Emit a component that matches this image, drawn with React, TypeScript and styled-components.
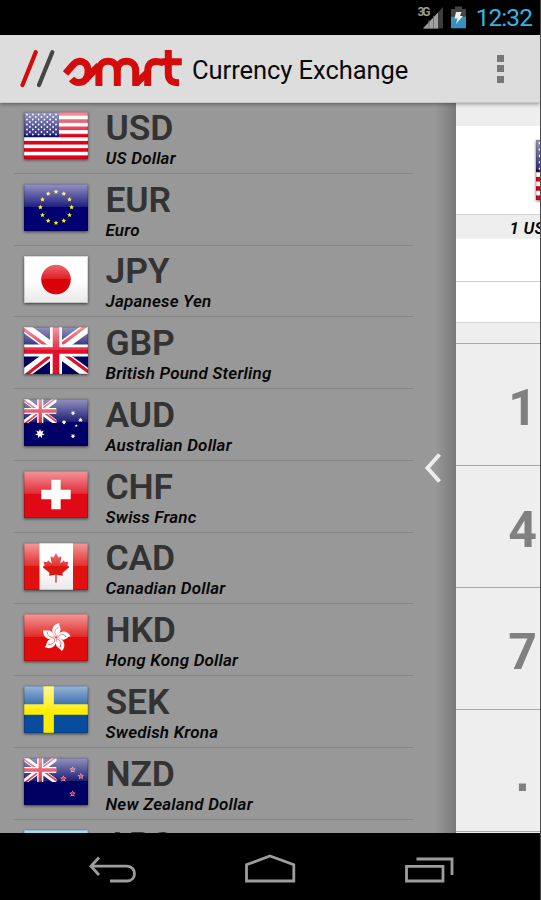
import type { ReactNode } from "react";
import styled, { createGlobalStyle } from "styled-components";

const currencies = [
  { code: "USD", name: "US Dollar" },
  { code: "EUR", name: "Euro" },
  { code: "JPY", name: "Japanese Yen" },
  { code: "GBP", name: "British Pound Sterling" },
  { code: "AUD", name: "Australian Dollar" },
  { code: "CHF", name: "Swiss Franc" },
  { code: "CAD", name: "Canadian Dollar" },
  { code: "HKD", name: "Hong Kong Dollar" },
  { code: "SEK", name: "Swedish Krona" },
  { code: "NZD", name: "New Zealand Dollar" },
  { code: "ARS" },
];

const keys = ["1", "4", "7", "."];

function starPoints(cx: number, cy: number, r: number, points = 5) {
  const list: string[] = [];
  for (let i = 0; i < points * 2; i++) {
    const radius = i % 2 ? r * 0.48 : r;
    const angle = (Math.PI * i) / points - Math.PI / 2;
    list.push(
      `${(cx + radius * Math.cos(angle)).toFixed(2)},${(cy + radius * Math.sin(angle)).toFixed(2)}`
    );
  }
  return list.join(" ");
}

function UnionJack() {
  return (
    <>
      <rect width="64" height="47" fill="#00005f" />
      <path d="M0 0 64 47M64 0 0 47" stroke="#fff" strokeWidth="10" />
      <path
        d="M-2 1 30 24.500M66 46 34 22.500M62 -1 34 20M2 48 30 26"
        stroke="#e0102a"
        strokeWidth="3.200"
      />
      <path d="M32 0V47M0 23.500H64" stroke="#fff" strokeWidth="12" />
      <path d="M32 0V47M0 23.500H64" stroke="#e0102a" strokeWidth="6.600" />
    </>
  );
}

const flagArt: Record<string, ReactNode> = {
  USD: (
    <>
      <rect width="64" height="47" fill="#fff" />
      {[0, 1, 2, 3, 4, 5, 6].map((i) => (
        <rect key={i} y={i * 7.23} width="64" height="3.62" fill="#e3001b" />
      ))}
      <rect width="35" height="25" fill="#12126c" />
      {[0, 1, 2, 3, 4, 5, 6, 7, 8].map((row) =>
        Array.from({ length: row % 2 ? 5 : 6 }, (_, i) => (
          <circle
            key={`${row}-${i}`}
            cx={3 + (row % 2 ? 2.9 : 0) + i * 5.8}
            cy={2.5 + row * 2.5}
            r="0.9"
            fill="#fff"
          />
        ))
      )}
    </>
  ),
  EUR: (
    <>
      <rect width="64" height="47" fill="#000070" />
      {Array.from({ length: 12 }, (_, i) => (
        <polygon
          key={i}
          points={starPoints(
            32 + 15.6 * Math.sin((i * Math.PI) / 6),
            23.3 - 15.6 * Math.cos((i * Math.PI) / 6),
            2.5
          )}
          fill="#ffee00"
        />
      ))}
    </>
  ),
  JPY: (
    <>
      <rect width="64" height="47" fill="url(#paper)" />
      <circle cx="32" cy="23.5" r="14.8" fill="#dc0008" />
    </>
  ),
  GBP: <UnionJack />,
  AUD: (
    <>
      <rect width="64" height="47" fill="#000066" />
      <svg width="32.500" height="24" viewBox="0 0 64 47" preserveAspectRatio="none">
        <UnionJack />
      </svg>
      <polygon points={starPoints(16, 34.7, 5, 7)} fill="#fff" />
      <polygon points={starPoints(49, 14, 2.5, 7)} fill="#fff" />
      <polygon points={starPoints(40, 23.2, 2.5, 7)} fill="#fff" />
      <polygon points={starPoints(56.5, 21, 2.5, 7)} fill="#fff" />
      <polygon points={starPoints(49, 37, 2.5, 7)} fill="#fff" />
      <polygon points={starPoints(52.3, 26.7, 1.5)} fill="#fff" />
    </>
  ),
  CHF: (
    <>
      <rect width="64" height="47" fill="#df0a16" />
      <path d="M32 8.800V38.200M17.300 23.500H46.700" stroke="#fff" strokeWidth="9.300" />
    </>
  ),
  CAD: (
    <>
      <rect width="64" height="47" fill="#df120f" />
      <rect x="15.500" width="33.500" height="47" fill="url(#paper)" />
      <path
        d="M32 10 34.500 14.500 37.600 13.200 36.300 20.600 40 17.300 40.900 19.300 44.500 18.700 43.400 22.600 45.500 24 38.400 30.100 39 32.700 32.600 31.700V39.500H31.400V31.700L25 32.700 25.600 30.100 18.500 24 20.600 22.600 19.500 18.700 23.100 19.300 24 17.300 27.700 20.600 26.400 13.200 29.500 14.500Z"
        fill="#dc1712"
      />
    </>
  ),
  HKD: (
    <>
      <rect width="64" height="47" fill="#e00c0c" />
      {[8, 80, 152, 224, 296].map((angle) => (
        <g key={angle} transform={`translate(32 23.500) rotate(${angle})`}>
          <path
            d="M0 -.5C-7 -4 -6 -12.500 1.500 -14.800C.5 -12 5 -9.500 3 -5.500C2 -3.500 .3 -3 0 -.5Z"
            fill="#fff"
          />
          <path d="M-.3 -2C-3 -5 -2 -8 0 -9.500" stroke="#e33b3b" strokeWidth=".7" fill="none" />
          <circle cx=".3" cy="-9.800" r=".7" fill="#e33b3b" />
        </g>
      ))}
    </>
  ),
  SEK: (
    <>
      <rect width="64" height="47" fill="#084d9d" />
      <path d="M24.700 0V47M0 23.500H64" stroke="#ffed00" strokeWidth="10.300" />
    </>
  ),
  NZD: (
    <>
      <rect width="64" height="47" fill="#000062" />
      <svg width="32.500" height="24" viewBox="0 0 64 47" preserveAspectRatio="none">
        <UnionJack />
      </svg>
      {[
        [48.6, 11.8],
        [56.8, 18.3],
        [39.4, 20.8],
        [48.6, 35.8],
      ].map(([x, y]) => (
        <g key={`${x}-${y}`}>
          <polygon points={starPoints(x, y, 3.3)} fill="#e8c8d8" />
          <polygon points={starPoints(x, y, 2.5)} fill="#e0102a" />
        </g>
      ))}
    </>
  ),
  ARS: (
    <>
      <rect width="64" height="47" fill="#45aee0" />
      <rect y="15.500" width="64" height="16" fill="#fff" />
    </>
  ),
};

function Flag({ code, large }: { code: string; large?: boolean }) {
  return (
    <FlagImage $large={large} viewBox="0 0 64 47" preserveAspectRatio="none">
      <defs>
        <linearGradient id="gloss" x1="0" y1="0" x2="0" y2="1">
          <stop offset="0" stopColor="#fff" stopOpacity=".58" />
          <stop offset="1" stopColor="#fff" stopOpacity=".12" />
        </linearGradient>
        <linearGradient id="paper" x1="0" y1="0" x2="0" y2="1">
          <stop offset=".5" stopColor="#fff" />
          <stop offset="1" stopColor="#e8e8e8" />
        </linearGradient>
      </defs>
      {flagArt[code]}
      <rect width="64" height="23" fill="url(#gloss)" />
      <rect x=".5" y=".5" width="63" height="46" fill="none" stroke="#000" strokeOpacity=".15" />
    </FlagImage>
  );
}

function Logo() {
  return (
    <svg width="165" height="44" viewBox="20 47 165 44" fill="none">
      <path d="M35.700 52.200 22.500 85" stroke="#d40b0b" strokeWidth="4.200" strokeLinecap="round" />
      <path d="M52.300 52.200 39 85" stroke="#464646" strokeWidth="4.200" strokeLinecap="round" />
      <g stroke="#d40b0b" strokeWidth="7">
        <path d="M65.500 73.500 72 66C76 61 80 60.700 83 62C87.500 63.800 88.500 68 88 73C87.500 79.500 83.500 82.500 78.500 82.500C75.500 82.500 73.500 81.300 71.500 79" />
        <path d="M85.500 79.500 99 65.500" />
        <path d="M98.900 86V70.500C98.900 58.200 117.300 58.200 117.300 70.500V86" />
        <path d="M117.300 70.500C117.300 58.200 135.700 58.200 135.700 70.500V86" />
        <path d="M136.500 83 149 71" />
        <path d="M147.700 86V71C147.700 62 154 59.500 163.500 63" />
        <path d="M168.300 50V74C168.300 80.500 172 82.700 179 82.700M161.500 61.700H181.800" />
      </g>
    </svg>
  );
}

export default function App() {
  return (
    <Screen>
      <GlobalStyle />
      <StatusBar>
        <svg width="50" height="26" viewBox="417 5 50 26">
          <path d="M443 7V28.500H423Z" fill="#3d3d3d" />
          <path d="M438 12.400V28.500H423Z" fill="#a0a0a0" />
          <path d="M429 20V29M433.500 16V29" stroke="#666" strokeWidth=".8" />
          <text x="417.500" y="16.300" fontSize="12" fontWeight="700" textLength="13" fill="#999">
            3G
          </text>
          <path d="M451 9H455V6.500H462V9H466V16.500H451Z" fill="#444" />
          <path d="M451 16.500H466V28.300H451Z" fill="#3592bd" />
          <path d="M456 12H461.500L460 16H463L456 24 457.500 18.500H454.500Z" fill="#eee" />
        </svg>
        <Clock>12:32</Clock>
      </StatusBar>
      <ActionBar>
        <Logo />
        <Title>Currency Exchange</Title>
        <Overflow>
          <Dot />
          <Dot />
          <Dot />
        </Overflow>
      </ActionBar>
      <Content>
        <Drawer>
          <CurrencyList>
            {currencies.map(({ code, name }) => (
              <CurrencyRow key={code}>
                <Flag code={code} />
                <CurrencyText>
                  <Code>{code}</Code>
                  {name && <Name>{name}</Name>}
                </CurrencyText>
              </CurrencyRow>
            ))}
          </CurrencyList>
          <Handle>
            <svg width="18" height="32" viewBox="0 0 18 32">
              <path d="M15.500 2.500 3.500 16 15.500 29.500" fill="none" stroke="#eee" strokeWidth="4" />
            </svg>
          </Handle>
        </Drawer>
        <Converter>
          <Band $height={23} />
          <Band $height={89} $light $line="#d3d3d3">
            <Flag code="USD" large />
          </Band>
          <Band $height={24}>
            <Rate>1 USD</Rate>
          </Band>
          <Band $height={43} $light $line="#cfcfcf" />
          <Band $height={41} $light $line="#d5d5d5" />
          <Band $height={21} $line="#a8a8a8" />
          {keys.map((key) => (
            <Key key={key} $point={key === "."}>
              {key}
            </Key>
          ))}
        </Converter>
      </Content>
      <NavBar>
        <svg width="540" height="67" viewBox="0 833 540 67" fill="none" stroke="#9d9d9d" strokeWidth="2.800">
          <path d="M91 866.200H127C137 866.200 137 881 127 881H110" />
          <path d="M99 857.500 91 866.200 99 875" />
          <path d="M246.500 881V864.800L270 856 293.800 864.800V881Z" />
          <path d="M406.500 866.300H443V881H406.500ZM416.500 859H452V875" />
        </svg>
      </NavBar>
    </Screen>
  );
}

const GlobalStyle = createGlobalStyle`
  body {
    margin: 0;
    background: #000;
    font-family: Roboto, "Liberation Sans", sans-serif;
  }

  * {
    box-sizing: border-box;
  }

  svg {
    display: block;
    flex-shrink: 0;
  }
`;

const Screen = styled.div`
  display: flex;
  flex-direction: column;
  width: 541px;
  height: 900px;
  overflow: hidden;
  border-right: 1px solid #4c4c4c;
  background: #000;
`;

const StatusBar = styled.div`
  display: flex;
  flex: 0 0 35px;
  align-items: center;
  justify-content: flex-end;
  gap: 8.5px;
  padding-right: 8px;
`;

const Clock = styled.span`
  padding-top: 1px;
  color: #33b5e5;
  font-size: 24.5px;
  letter-spacing: -0.95px;
  line-height: 34px;
`;

const ActionBar = styled.header`
  display: flex;
  flex: 0 0 68px;
  align-items: center;
  padding: 0 35px 0 20px;
  background: #ddd;
  border-bottom: 1px solid #c6c6c6;
  box-shadow: 0 1px 4px rgba(0, 0, 0, 0.4);
  z-index: 1;
`;

const Title = styled.h1`
  margin: 2px 0 0 7px;
  color: #0a0a0a;
  font-size: 25.5px;
  font-weight: 400;
  letter-spacing: -0.05px;
  line-height: 34px;
  white-space: nowrap;
`;

const Overflow = styled.div`
  display: flex;
  flex-direction: column;
  gap: 3.5px;
  margin-left: auto;
`;

const Dot = styled.span`
  width: 7px;
  height: 7px;
  margin-right: 1px;
  background: #777;
`;

const Content = styled.main`
  display: flex;
  flex: 0 0 730px;
  min-height: 0;
  overflow: hidden;
`;

const Drawer = styled.aside`
  display: flex;
  flex: 0 0 455.5px;
  background: linear-gradient(to right, transparent 435px, rgba(0, 0, 0, 0.2)), #989898;
`;

const CurrencyList = styled.ul`
  flex: 0 0 399px;
  margin: -1px 0 0 14px;
  padding: 0;
  list-style: none;
`;

const CurrencyRow = styled.li`
  display: flex;
  align-items: flex-start;
  height: 71.75px;
  padding-left: 10px;
  border-bottom: 1.5px solid #868686;
`;

const FlagImage = styled.svg<{ $large?: boolean }>`
  width: ${({ $large }) => ($large ? "82px" : "64px")};
  height: ${({ $large }) => ($large ? "60px" : "47px")};
  margin-top: ${({ $large }) => ($large ? "0" : "10px")};
  filter: drop-shadow(0 1px 1.5px rgba(0, 0, 0, 0.6));
`;

const CurrencyText = styled.div`
  display: flex;
  flex-direction: column;
  gap: 2px;
  padding: 7.8px 0 0 17.5px;
`;

const Code = styled.span`
  color: #333;
  font-size: 35.5px;
  font-weight: 600;
  letter-spacing: -0.15px;
  line-height: 36px;
`;

const Name = styled.span`
  color: #080808;
  font-size: 17px;
  font-style: italic;
  font-weight: 600;
  letter-spacing: 0.2px;
  line-height: 20px;
  white-space: nowrap;
`;

const Handle = styled.div`
  display: flex;
  align-items: center;
  padding-left: 11px;
`;

const Converter = styled.section`
  flex: 1;
  min-width: 0;
  background: #eee;
  overflow: hidden;
`;

const Band = styled.div<{ $height: number; $light?: boolean; $line?: string }>`
  display: flex;
  align-items: center;
  height: ${({ $height }) => $height}px;
  padding-left: ${({ $light }) => ($light ? "80.5px" : "54px")};
  background: ${({ $light }) => ($light ? "#fff" : "#eee")};
  border-bottom: ${({ $line }) => ($line ? `1.5px solid ${$line}` : "none")};
`;

const Rate = styled.span`
  margin-top: 2px;
  font-size: 17px;
  font-style: italic;
  font-weight: 600;
  letter-spacing: 0.2px;
  white-space: nowrap;
`;

const Key = styled.div<{ $point: boolean }>`
  display: flex;
  align-items: center;
  justify-content: center;
  width: 134px;
  height: 121.9px;
  padding-top: 7px;
  border-bottom: 1.5px solid #a8a8a8;
  color: #808080;
  font-family: ${({ $point }) => ($point ? '"Liberation Sans", sans-serif' : "inherit")};
  font-size: 50px;
  font-weight: 700;
`;

const NavBar = styled.nav`
  flex: 0 0 67px;
  background: #000;
`;
